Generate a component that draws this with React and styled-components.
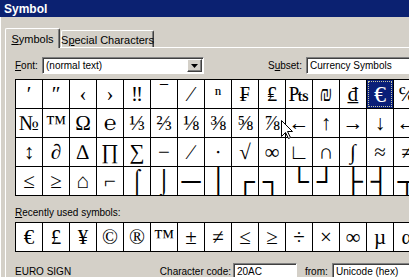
import React from "react";
import styled, { createGlobalStyle } from "styled-components";

const Global = createGlobalStyle`
  html, body { margin: 0; padding: 0; background: #d4d0c8; }
  body {
    width: 409px; height: 277px; overflow: hidden;
    font-family: "Liberation Sans", Arial, sans-serif; font-size: 10px; color: #000;
  }
`;

const Window = styled.div`
  width: 409px; height: 277px; position: relative; overflow: hidden;
  background: #d4d0c8; display: flex; flex-direction: column;
`;

const TitleBar = styled.div`
  flex: none; height: 17px; background: #0b2171; color: #fff;
  font-weight: bold; font-size: 12px; display: flex; align-items: center;
  padding-left: 4px;
`;

const Body = styled.div`
  flex: 1; min-height: 0; border-left: 1px solid #fff;
  padding: 10px 0 0 4px; display: flex; flex-direction: column;
`;

const TabStrip = styled.div`
  flex: none; display: flex; align-items: flex-end; height: 20px;
  position: relative; z-index: 1;
`;

const Tab = styled.div`
  box-sizing: border-box; white-space: nowrap;
  width: ${p => p.$w}px;
  height: ${p => (p.$active ? 20 : 17)}px;
  margin-bottom: ${p => (p.$active ? -1 : 0)}px;
  margin-left: ${p => (p.$active ? 0 : 1)}px;
  background: #d4d0c8;
  border-top: 1px solid #fff; border-left: 1px solid #fff;
  border-right: 1px solid #404040; box-shadow: inset -1px 0 #808080;
  border-radius: 2px 2px 0 0;
  display: flex; align-items: center; justify-content: center;
  padding-top: ${p => (p.$active ? 0 : 1)}px;
  font-size: 11px;
`;

const Panel = styled.div`
  flex: 1; min-height: 0; border-top: 1px solid #fff; border-left: 1px solid #fff;
  padding: 9px 0 0 9px; display: flex; flex-direction: column;
`;

const U = styled.span` text-decoration: underline; `;

const FieldRow = styled.div`
  flex: none; display: flex; align-items: center; height: 17px; white-space: nowrap;
`;

const Label = styled.div`
  flex: none; width: ${p => p.$w}px; text-align: ${p => p.$align || "left"};
  margin-left: ${p => p.$ml || 0}px; white-space: nowrap;
`;

const Sunken = styled.div`
  flex: none; box-sizing: border-box; height: 17px; width: ${p => p.$w}px;
  margin-left: ${p => p.$ml || 0}px; white-space: nowrap;
  background: #fff; border-top: 1px solid #808080; border-left: 1px solid #808080;
  border-bottom: 1px solid #fff; border-right: 1px solid #fff;
  box-shadow: inset 1px 1px #404040;
  display: flex; align-items: center; padding-left: 3px; position: relative;
`;

const DropButton = styled.div`
  position: absolute; right: 1px; top: 1px; bottom: 1px; width: 15px;
  box-sizing: border-box; background: #d4d0c8;
  border-top: 1px solid #fff; border-left: 1px solid #fff;
  border-right: 1px solid #404040; border-bottom: 1px solid #404040;
  box-shadow: inset -1px -1px #808080;
  display: flex; align-items: center; justify-content: center;
`;

const Grid = styled.div`
  flex: none; display: grid; grid-template-columns: repeat(15, 26px);
  grid-auto-rows: 28px; gap: 1px; background: #000; border: 1px solid #000;
  width: max-content; margin-top: ${p => p.$mt}px;
`;

const Cell = styled.div`
  background: ${p => (p.$sel ? "#0a1f78" : "#fff")};
  color: ${p => (p.$sel ? "#fff" : "#000")};
  display: flex; align-items: center; justify-content: center;
  font-family: "Liberation Serif", "Times New Roman", "DejaVu Serif", serif;
  font-size: ${p => p.$fs || 21}px; line-height: 1; overflow: hidden;
  font-weight: ${p => (p.$box ? "bold" : "normal")};
  outline: ${p => (p.$sel ? "1px dotted #c8c8a0" : "none")};
  outline-offset: -2px;
`;

const SectionLabel = styled.div`
  flex: none; margin-top: 10px; line-height: 13px;
`;

const BottomRow = styled(FieldRow)` margin-top: 11px; `;

const Cursor = styled.svg`
  position: absolute; left: 281px; top: 120px; width: 13px; height: 20px;
`;

const rows = [
  ["′", "″", "‹", "›", "‼", "‾", "⁄", "ⁿ", "₣", "₤", "₧", "₪", "₫", "€", "℅"],
  ["№", "™", "Ω", "℮", "⅓", "⅔", "⅛", "⅜", "⅝", "⅞", "←", "↑", "→", "↓", "↔"],
  ["↕", "∂", "∆", "∏", "∑", "−", "∕", "∙", "√", "∞", "∟", "∩", "∫", "≈", "≠"],
  ["≤", "≥", "⌂", "⌐", "⌠", "⌡", "─", "│", "┌", "┐", "└", "┘", "├", "┤", "┬"],
];
const boxChars = "─│┌┐└┘├┤┬";
const recent = ["€", "£", "¥", "©", "®", "™", "±", "≠", "≤", "≥", "÷", "×", "∞", "µ", "α"];

const sizeFor = c => {
  if (c === "€") return 24;
  if (boxChars.includes(c)) return 27;
  if (c === "⌠" || c === "⌡") return 24;
  return 21;
};

export default function App() {
  return (
    <Window>
      <Global />
      <TitleBar>Symbol</TitleBar>
      <Body>
        <TabStrip>
          <Tab $active $w={55}><span><U>S</U>ymbols</span></Tab>
          <Tab $w={93}><span>S<U>p</U>ecial Characters</span></Tab>
        </TabStrip>
        <Panel>
          <FieldRow>
            <Label $w={27}><U>F</U>ont:</Label>
            <Sunken $w={162}>
              (normal text)
              <DropButton>
                <svg width="7" height="4" viewBox="0 0 7 4"><path d="M0 0h7L3.5 4z" fill="#000" /></svg>
              </DropButton>
            </Sunken>
            <Label $w={38} $ml={64}>S<U>u</U>bset:</Label>
            <Sunken $w={120}>Currency Symbols</Sunken>
          </FieldRow>
          <Grid $mt={5}>
            {rows.flat().map((c, i) => (
              <Cell key={i} $sel={c === "€"} $box={boxChars.includes(c)} $fs={sizeFor(c)}>{c}</Cell>
            ))}
          </Grid>
          <SectionLabel><U>R</U>ecently used symbols:</SectionLabel>
          <Grid $mt={3}>
            {recent.map((c, i) => (
              <Cell key={i}>{c}</Cell>
            ))}
          </Grid>
          <BottomRow>
            <Label $w={140}>EURO SIGN</Label>
            <Label $w={76} $align="right">Character code:</Label>
            <Sunken $w={64} $ml={2}>20AC</Sunken>
            <Label $w={27} $ml={8}>from:</Label>
            <Sunken $w={100}>Unicode (hex)</Sunken>
          </BottomRow>
        </Panel>
      </Body>
      <Cursor viewBox="0 0 13 20">
        <path d="M0.5 0.5 L0.5 16.5 L4.5 12.5 L7.5 18.5 L9.5 17.5 L6.5 11.5 L11.5 11.5 Z" fill="#fff" stroke="#000" strokeWidth="1" />
      </Cursor>
    </Window>
  );
}
